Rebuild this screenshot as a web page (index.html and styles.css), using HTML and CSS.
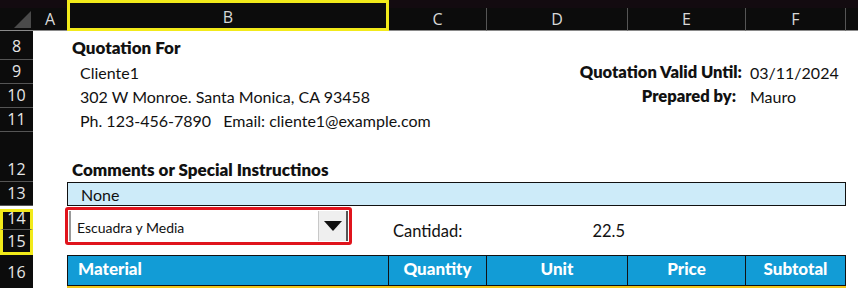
FILE: index.html
```html
<!DOCTYPE html>
<html lang="en">
  <head>
    <meta charset="UTF-8" />
    <meta name="viewport" content="width=device-width, initial-scale=1.0" />
    <title>Quotation</title>
    <link rel="stylesheet" href="styles.css">
  </head>
  <body>
    <div class="sheet">
      <!-- column headers -->
      <div class="strip"></div>
      <div class="corner"><span class="tri"></span></div>
      <div class="col-head c-a">A</div>
      <div class="col-head c-b selected">B</div>
      <div class="col-head c-c">C</div>
      <div class="col-head c-d">D</div>
      <div class="col-head c-e">E</div>
      <div class="col-head c-f">F</div>
      <div class="col-head c-g"></div>

      <!-- row numbers -->
      <div class="row-head r8">8</div>
      <div class="row-head r9">9</div>
      <div class="row-head r10">10</div>
      <div class="row-head r11">11</div>
      <div class="row-head r12">12</div>
      <div class="row-head r13">13</div>
      <div class="row-head r14 sel-top">14</div>
      <div class="row-head r15 sel-bottom">15</div>
      <div class="row-head r16">16</div>
      <div class="row-head r17"></div>

      <!-- cells -->
      <div class="cell heading r8 c-b">Quotation For</div>
      <div class="cell indent r9 c-b">Cliente1</div>
      <div class="cell indent r10 c-b">302 W Monroe. Santa Monica, CA 93458</div>
      <div class="cell indent r11 c-b wide">Ph. 123-456-7890&nbsp;&nbsp;&nbsp;Email: cliente1@example.com</div>

      <div class="cell label r9 c-de">Quotation Valid Until:</div>
      <div class="cell value r9 c-f">03/11/2024</div>
      <div class="cell label short r10 c-de">Prepared by:</div>
      <div class="cell value r10 c-f">Mauro</div>

      <div class="cell heading r12 c-b wide">Comments or Special Instructinos</div>
      <div class="comment r13">None</div>

      <div class="dropdown">
        <div class="dd-field">
          <span class="dd-text">Escuadra y Media</span>
          <span class="dd-btn">
            <svg width="18" height="10" viewBox="0 0 18 10"><path d="M0 0 H18 L9 10 Z" fill="#111"/></svg>
          </span>
        </div>
      </div>
      <div class="cell qty-label c-c">Cantidad:</div>
      <div class="cell qty-value c-d">22.5</div>

      <div class="th r16 c-b left">Material</div>
      <div class="th r16 c-c">Quantity</div>
      <div class="th r16 c-d">Unit</div>
      <div class="th r16 c-e">Price</div>
      <div class="th r16 c-f">Subtotal</div>
      <div class="gold r17"></div>
    </div>
  </body>
</html>
```

FILE: styles.css
```css
* {
  margin: 0;
  padding: 0;
  box-sizing: border-box;
}

body {
  font-family: Lato, "Noto Sans", sans-serif;
  background: #fff;
  color: #111;
  width: 858px;
  height: 288px;
  overflow: hidden;
}

.sheet {
  display: grid;
  grid-template-columns: 33px 34px 322px 98px 141px 118px 100px 1fr;
  grid-template-rows: 8px 23px 29px 24px 24px 24px 50px 24px 24px 25px 31px 1fr;
  height: 288px;
}

/* placement */
.c-a { grid-column: 2; }
.c-b { grid-column: 3; }
.c-c { grid-column: 4; }
.c-d { grid-column: 5; }
.c-e { grid-column: 6; }
.c-f { grid-column: 7; }
.c-g { grid-column: 8; }
.c-de { grid-column: 5 / 7; }
.r8 { grid-row: 3; }
.r9 { grid-row: 4; }
.r10 { grid-row: 5; }
.r11 { grid-row: 6; }
.r12 { grid-row: 7; }
.r13 { grid-row: 8; }
.r14 { grid-row: 9; }
.r15 { grid-row: 10; }
.r16 { grid-row: 11; }
.r17 { grid-row: 12; }

/* header strip */
.strip {
  grid-column: 1 / -1;
  grid-row: 1;
  background: #130b10;
}

.corner {
  grid-column: 1;
  grid-row: 2;
  background: #0c0c0c;
  border-bottom: 1px solid #8a8a8a;
  position: relative;
}

.tri {
  position: absolute;
  right: 2px;
  bottom: 2px;
  width: 0;
  height: 0;
  border-left: 17px solid transparent;
  border-bottom: 17px solid #4a4a4a;
}

.col-head {
  grid-row: 2;
  background: #0c0c0c;
  color: #d8d8d8;
  font-family: "Open Sans", sans-serif;
  font-size: 16px;
  display: flex;
  align-items: flex-end;
  justify-content: center;
  padding-bottom: 0;
  border-right: 1px solid #555;
  border-bottom: 1px solid #8a8a8a;
}

.col-head.c-a {
  border-right: none;
}

.col-head.selected {
  grid-row: 1 / 3;
  border: 3px solid #f2ea1a;
  padding-bottom: 0;
  background: #0c0c0c;
}

.col-head.c-g {
  border-right: none;
}

.row-head {
  grid-column: 1;
  background: #0c0c0c;
  color: #e6e6e6;
  font-family: "Open Sans", sans-serif;
  font-size: 16px;
  display: flex;
  align-items: flex-end;
  justify-content: center;
  padding-bottom: 1px;
  border-bottom: 1px solid #555;
}

.row-head.r8 {
  padding-bottom: 2px;
}

.row-head.sel-top {
  border: 3px solid #f2ea1a;
  border-bottom: 1px solid #555;
  padding-bottom: 0;
  margin-top: 3px;
}

.row-head.sel-bottom {
  border: 3px solid #f2ea1a;
  border-top: none;
  padding-bottom: 0;
}

.row-head.r16 {
  padding-bottom: 3px;
  border-bottom: none;
}

/* cells */
.cell {
  font-size: 16px;
  display: flex;
  align-items: flex-end;
  padding-bottom: 2px;
  white-space: nowrap;
}

.heading {
  font-weight: 800;
  font-size: 17px;
  padding-left: 5px;
  padding-bottom: 2px;
}

.indent {
  padding-left: 13px;
}

.wide {
  grid-column: 3 / 6;
}

.label {
  font-weight: 800;
  font-size: 16.5px;
  justify-content: flex-end;
  padding-right: 4px;
}

.label.short {
  padding-right: 10px;
}

.value {
  padding-left: 4px;
}

.comment {
  grid-column: 3 / 8;
  background: #cdebf9;
  border: 1px solid #111;
  font-size: 16px;
  padding-left: 13px;
  display: flex;
  align-items: center;
}

.dropdown {
  grid-column: 3 / 5;
  grid-row: 9 / 11;
  margin-left: -2px;
  margin-top: 1px;
  width: 287px;
  height: 38px;
  border: 3px solid #e0141c;
  border-radius: 3px;
  background: #fff;
  padding: 1px;
}

.dd-field {
  height: 100%;
  display: flex;
  align-items: stretch;
  border-left: 2px solid #9a9a9a;
}

.dd-text {
  flex: 1;
  font-size: 14px;
  display: flex;
  align-items: center;
  padding-left: 6px;
  padding-top: 2px;
}

.dd-btn {
  width: 30px;
  background: #efefef;
  border-left: 1px solid #c8c8c8;
  border-right: 2px solid #555;
  display: flex;
  align-items: center;
  justify-content: center;
}

.qty-label {
  grid-row: 9 / 11;
  align-items: center;
  padding: 0 0 0 4px;
  font-size: 16.5px;
}

.qty-value {
  grid-row: 9 / 11;
  align-items: center;
  justify-content: flex-end;
  padding: 0 3px 0 0;
  font-size: 16.5px;
}

.th {
  background: #129cd6;
  color: #fff;
  font-weight: 900;
  font-size: 17px;
  display: flex;
  align-items: center;
  justify-content: center;
  padding-bottom: 4px;
  border: 1px solid #111;
  border-left: none;
}

.th.left {
  justify-content: flex-start;
  padding-left: 10px;
  border-left: 1px solid #111;
}

.gold {
  grid-column: 3 / 8;
  border-top: 3px solid #f0c419;
}
```
